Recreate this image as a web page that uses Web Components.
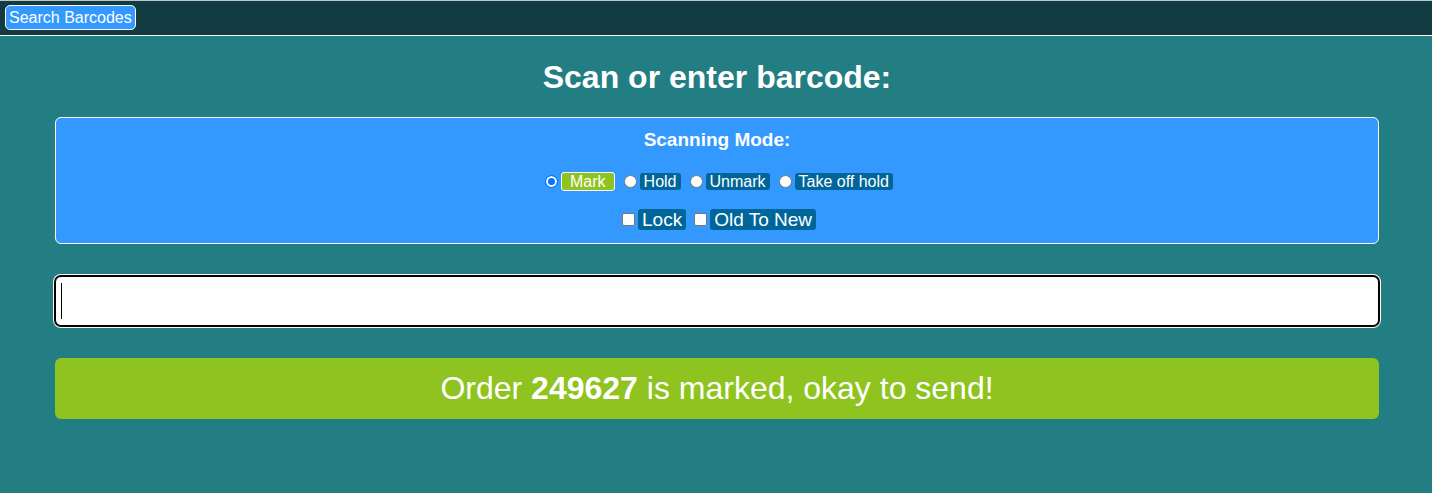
<!DOCTYPE html>
<html lang="en">
<head>
<meta charset="utf-8">
<title>Scan barcodes</title>
<style>
  html, body { margin: 0; min-height: 100%; }
  body { background: #237e83; color: #fff; font: 16px/17px "Liberation Sans", Arial, sans-serif; }
</style>
</head>
<body>
<scan-app></scan-app>
<script>
const define = (name, html) => {
  const template = document.createElement('template');
  template.innerHTML = html;
  customElements.define(name, class extends HTMLElement {
    constructor() {
      super();
      this.attachShadow({ mode: 'open' }).append(template.content.cloneNode(true));
    }
  });
};

define('top-bar', `
<style>
  :host { display: flex; box-sizing: border-box; padding: 4px 5px 5px; background: #123c42; border-top: 1px solid #b9c8ca; border-bottom: 1px solid #fff; }
  button { margin: 0; padding: 3px; font: inherit; color: #fff; background: #39f; border: 1px solid #fff; border-radius: 5px; cursor: pointer; }
</style>
<button type="button"><slot></slot></button>`);

define('scan-modes', `
<style>
  :host { display: block; padding: 11px 0 13px; background: #39f; border: 1px solid #fff; border-radius: 6px; }
  h2 { margin: 0 0 21px; font-size: 19px; line-height: 22px; text-align: center; }
  .row { display: flex; justify-content: center; align-items: center; gap: 9px; padding-left: 4px; }
  .options { gap: 8px; margin-top: 18px; font-size: 19px; line-height: 21px; }
  .choice { display: flex; align-items: center; gap: 3px; }
  input { appearance: none; box-sizing: border-box; width: 13px; height: 13px; margin: 0; background: #fff; border: 1px solid #767676; }
  input[type=radio] { border-radius: 50%; }
  input[type=checkbox] { border-radius: 2px; }
  input[type=radio]:checked { background: #0075ff; border-color: #0075ff; box-shadow: inset 0 0 0 2px #fff; }
  label { padding: 0 4px; background: #069; border-radius: 3px; }
  input[type=radio]:checked + label { padding: 0 8px; background: #8fc31f; border: 1px solid #fff; }
</style>
<h2>Scanning Mode:</h2>
<div class="row" role="radiogroup" aria-label="Scanning mode">
  <span class="choice"><input type="radio" name="mode" id="mark" checked><label for="mark">Mark</label></span>
  <span class="choice"><input type="radio" name="mode" id="hold"><label for="hold">Hold</label></span>
  <span class="choice"><input type="radio" name="mode" id="unmark"><label for="unmark">Unmark</label></span>
  <span class="choice"><input type="radio" name="mode" id="release"><label for="release">Take off hold</label></span>
</div>
<div class="row options">
  <span class="choice"><input type="checkbox" id="lock"><label for="lock">Lock</label></span>
  <span class="choice"><input type="checkbox" id="order"><label for="order">Old To New</label></span>
</div>`);

define('barcode-field', `
<style>
  :host { display: block; }
  input { display: block; box-sizing: border-box; width: 100%; height: 50px; margin: 0; padding: 0 4px; font: 32px/36px "Liberation Sans", Arial, sans-serif; color: #000;
    background: linear-gradient(#000, #000) 5px 50% / 1px 36px no-repeat #fff; caret-color: transparent;
    border: 1px solid #000; border-radius: 6px; outline: none; box-shadow: 0 0 0 1px #000, 0 0 0 2px #fff; }
  input:not(:placeholder-shown) { background: #fff; caret-color: #000; }
</style>
<input type="text" placeholder=" " aria-label="Barcode" autocomplete="off">`);

define('status-message', `
<style>
  :host { display: block; padding: 12px 0 13px; font-size: 32px; line-height: 36px; text-align: center; background: #8fc31f; border-radius: 6px; }
</style>
<slot></slot>`);

define('scan-app', `
<style>
  :host { display: block; }
  main { display: flex; flex-direction: column; margin: 0 53px 0 55px; padding-top: 23px; }
  h1 { margin: 0 0 22px; font-size: 32px; line-height: 36px; text-align: center; }
  barcode-field { margin: 32px 0; }
</style>
<top-bar>Search Barcodes</top-bar>
<main>
  <h1>Scan or enter barcode:</h1>
  <scan-modes></scan-modes>
  <barcode-field></barcode-field>
  <status-message role="status">Order <b>249627</b> is marked, okay to send!</status-message>
</main>`);
</script>
</body>
</html>
